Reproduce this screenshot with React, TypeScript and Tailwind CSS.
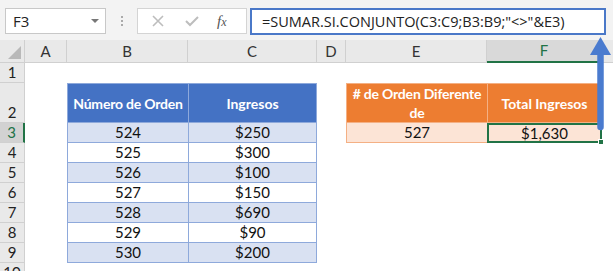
import React from 'react';

const cellFont = { fontFamily: 'Lato, "Open Sans", sans-serif' };

const orders = [
  { n: '524', v: '$250' },
  { n: '525', v: '$300' },
  { n: '526', v: '$100' },
  { n: '527', v: '$150' },
  { n: '528', v: '$690' },
  { n: '529', v: '$90' },
  { n: '530', v: '$200' },
];

const cols = ['A', 'B', 'C', 'D', 'E', 'F'];

export default function App() {
  return (
    <div className="relative w-[613px] h-[271px] overflow-hidden bg-white" style={{ fontFamily: '"Open Sans", sans-serif' }}>
      {/* Formula bar */}
      <div className="h-[40px] bg-[#f3f3f3] flex items-start pt-[8px] pl-[5px]">
        <div className="w-[101px] h-[26px] bg-white border border-[#c8c8c8] flex items-center justify-between pl-[7px] pr-[6px]">
          <span className="text-[15px] text-[#222]">F3</span>
          <span className="w-0 h-0 border-l-[4px] border-r-[4px] border-t-[4px] border-l-transparent border-r-transparent border-t-[#777]" />
        </div>
        <div className="w-[31px] h-[26px] flex flex-col items-center justify-center gap-[2px]">
          <span className="w-[2px] h-[2px] bg-[#aaa]" />
          <span className="w-[2px] h-[2px] bg-[#aaa]" />
          <span className="w-[2px] h-[2px] bg-[#aaa]" />
        </div>
        <div className="w-[110px] h-[26px] bg-white border border-[#d4d4d4] flex items-center">
          <svg width="14" height="14" viewBox="0 0 14 14" className="ml-[13px]">
            <path d="M2 2 L12 12 M12 2 L2 12" stroke="#bdbdbd" strokeWidth="1.6" />
          </svg>
          <svg width="16" height="14" viewBox="0 0 16 14" className="ml-[19px]">
            <path d="M2 7 L6 11 L14 3" stroke="#bdbdbd" strokeWidth="2" fill="none" />
          </svg>
          <span className="ml-[17px] text-[15px] italic text-[#555]" style={{ fontFamily: '"Liberation Serif", serif' }}>
            f<span className="text-[12px]">x</span>
          </span>
        </div>
        <div className="ml-[3px] w-[356px] h-[27px] bg-white border-[2.5px] border-[#4a78c8] flex items-center pl-[10px]">
          <span className="text-[14.5px] text-[#222] whitespace-nowrap">=SUMAR.SI.CONJUNTO(C3:C9;B3:B9;"&lt;&gt;"&amp;E3)</span>
        </div>
      </div>

      {/* Sheet */}
      <div
        className="grid grid-cols-[25px_42px_121px_129px_29px_141px_115px_1fr] grid-rows-[23px_20px_40px_repeat(8,20px)]"
        style={cellFont}
      >
        {/* Column headers */}
        <div className="bg-[#e9e9e9] border-r border-b border-[#d0d0d0] flex items-end justify-end pr-[3px] pb-[3px]">
          <span className="w-0 h-0 border-l-[13px] border-l-transparent border-b-[13px] border-b-[#b9b9b9]" />
        </div>
        {cols.map((c) => (
          <div
            key={c}
            className={`flex items-center justify-center text-[15px] border-r border-[#d0d0d0] ${
              c === 'F' ? 'bg-[#d9d9d9] border-b-2 border-b-[#217346] text-[#217346]' : 'bg-[#e9e9e9] border-b text-[#333]'
            }`}
          >
            {c}
          </div>
        ))}
        <div className="bg-[#e9e9e9] border-b border-[#d0d0d0]" />

        {/* Row 1 */}
        <RowHead n="1" />
        <div className="col-span-7" />

        {/* Row 2 */}
        <RowHead n="2" />
        <div />
        <div className="bg-[#4472c4] border border-r-0 border-[#8ea9db] text-white font-bold text-[14px] tracking-[-0.2px] whitespace-nowrap flex items-center justify-center">
          Número de Orden
        </div>
        <div className="bg-[#4472c4] border border-[#8ea9db] text-white font-bold text-[14px] flex items-center justify-center">
          Ingresos
        </div>
        <div />
        <div className="bg-[#ed7d31] border border-r-0 border-[#f4b084] text-white font-bold text-[14px] tracking-[-0.2px] leading-[19px] whitespace-nowrap flex items-center justify-center text-center">
          # de Orden Diferente
          <br />
          de
        </div>
        <div className="bg-[#ed7d31] border border-[#f4b084] text-white font-bold text-[14px] flex items-center justify-center">
          Total Ingresos
        </div>
        <div />

        {orders.map((o, i) => {
          const fill = i % 2 === 0 ? 'bg-[#d9e1f2]' : 'bg-white';
          return (
            <React.Fragment key={o.n}>
              <RowHead n={String(i + 3)} active={i === 0} />
              <div />
              <div className={`${fill} border-l border-b border-[#8ea9db] text-[15px] text-[#111] flex items-center justify-center`}>
                {o.n}
              </div>
              <div className={`${fill} border-l border-r border-b border-[#8ea9db] text-[15px] text-[#111] flex items-center justify-center`}>
                {o.v}
              </div>
              <div />
              {i === 0 ? (
                <>
                  <div className="bg-[#fce4d6] border-l border-b border-[#f4b084] text-[15px] text-[#111] flex items-center justify-center">
                    527
                  </div>
                  <div className="relative bg-[#fce4d6] border-2 border-[#217346] text-[15px] text-[#111] flex items-center justify-center">
                    $1,630
                    <span className="absolute -right-[4px] -bottom-[4px] w-[6px] h-[6px] bg-[#217346] border border-white" />
                  </div>
                </>
              ) : (
                <>
                  <div />
                  <div />
                </>
              )}
              <div />
            </React.Fragment>
          );
        })}
        <RowHead n="10" />
        <div className="col-span-7" />
      </div>

      {/* Arrow pointing to formula */}
      <svg className="absolute left-[588px] top-[35px]" width="26" height="100" viewBox="0 0 26 100">
        <path d="M12.5 18 L12.5 92" stroke="#4a7bcf" strokeWidth="6.5" strokeLinecap="round" />
        <path d="M12.5 2 L23 20 L2 20 Z" fill="#4a7bcf" />
      </svg>
    </div>
  );
}

function RowHead({ n, active = false }: { n: string; active?: boolean }) {
  return (
    <div
      className={`border-b border-[#d0d0d0] text-[15px] flex items-end justify-center ${
        active ? 'bg-[#d2d2d2] border-r-2 border-r-[#217346] text-[#217346]' : 'bg-[#e9e9e9] border-r text-[#222]'
      }`}
    >
      <span className="leading-[19px]">{n}</span>
    </div>
  );
}
